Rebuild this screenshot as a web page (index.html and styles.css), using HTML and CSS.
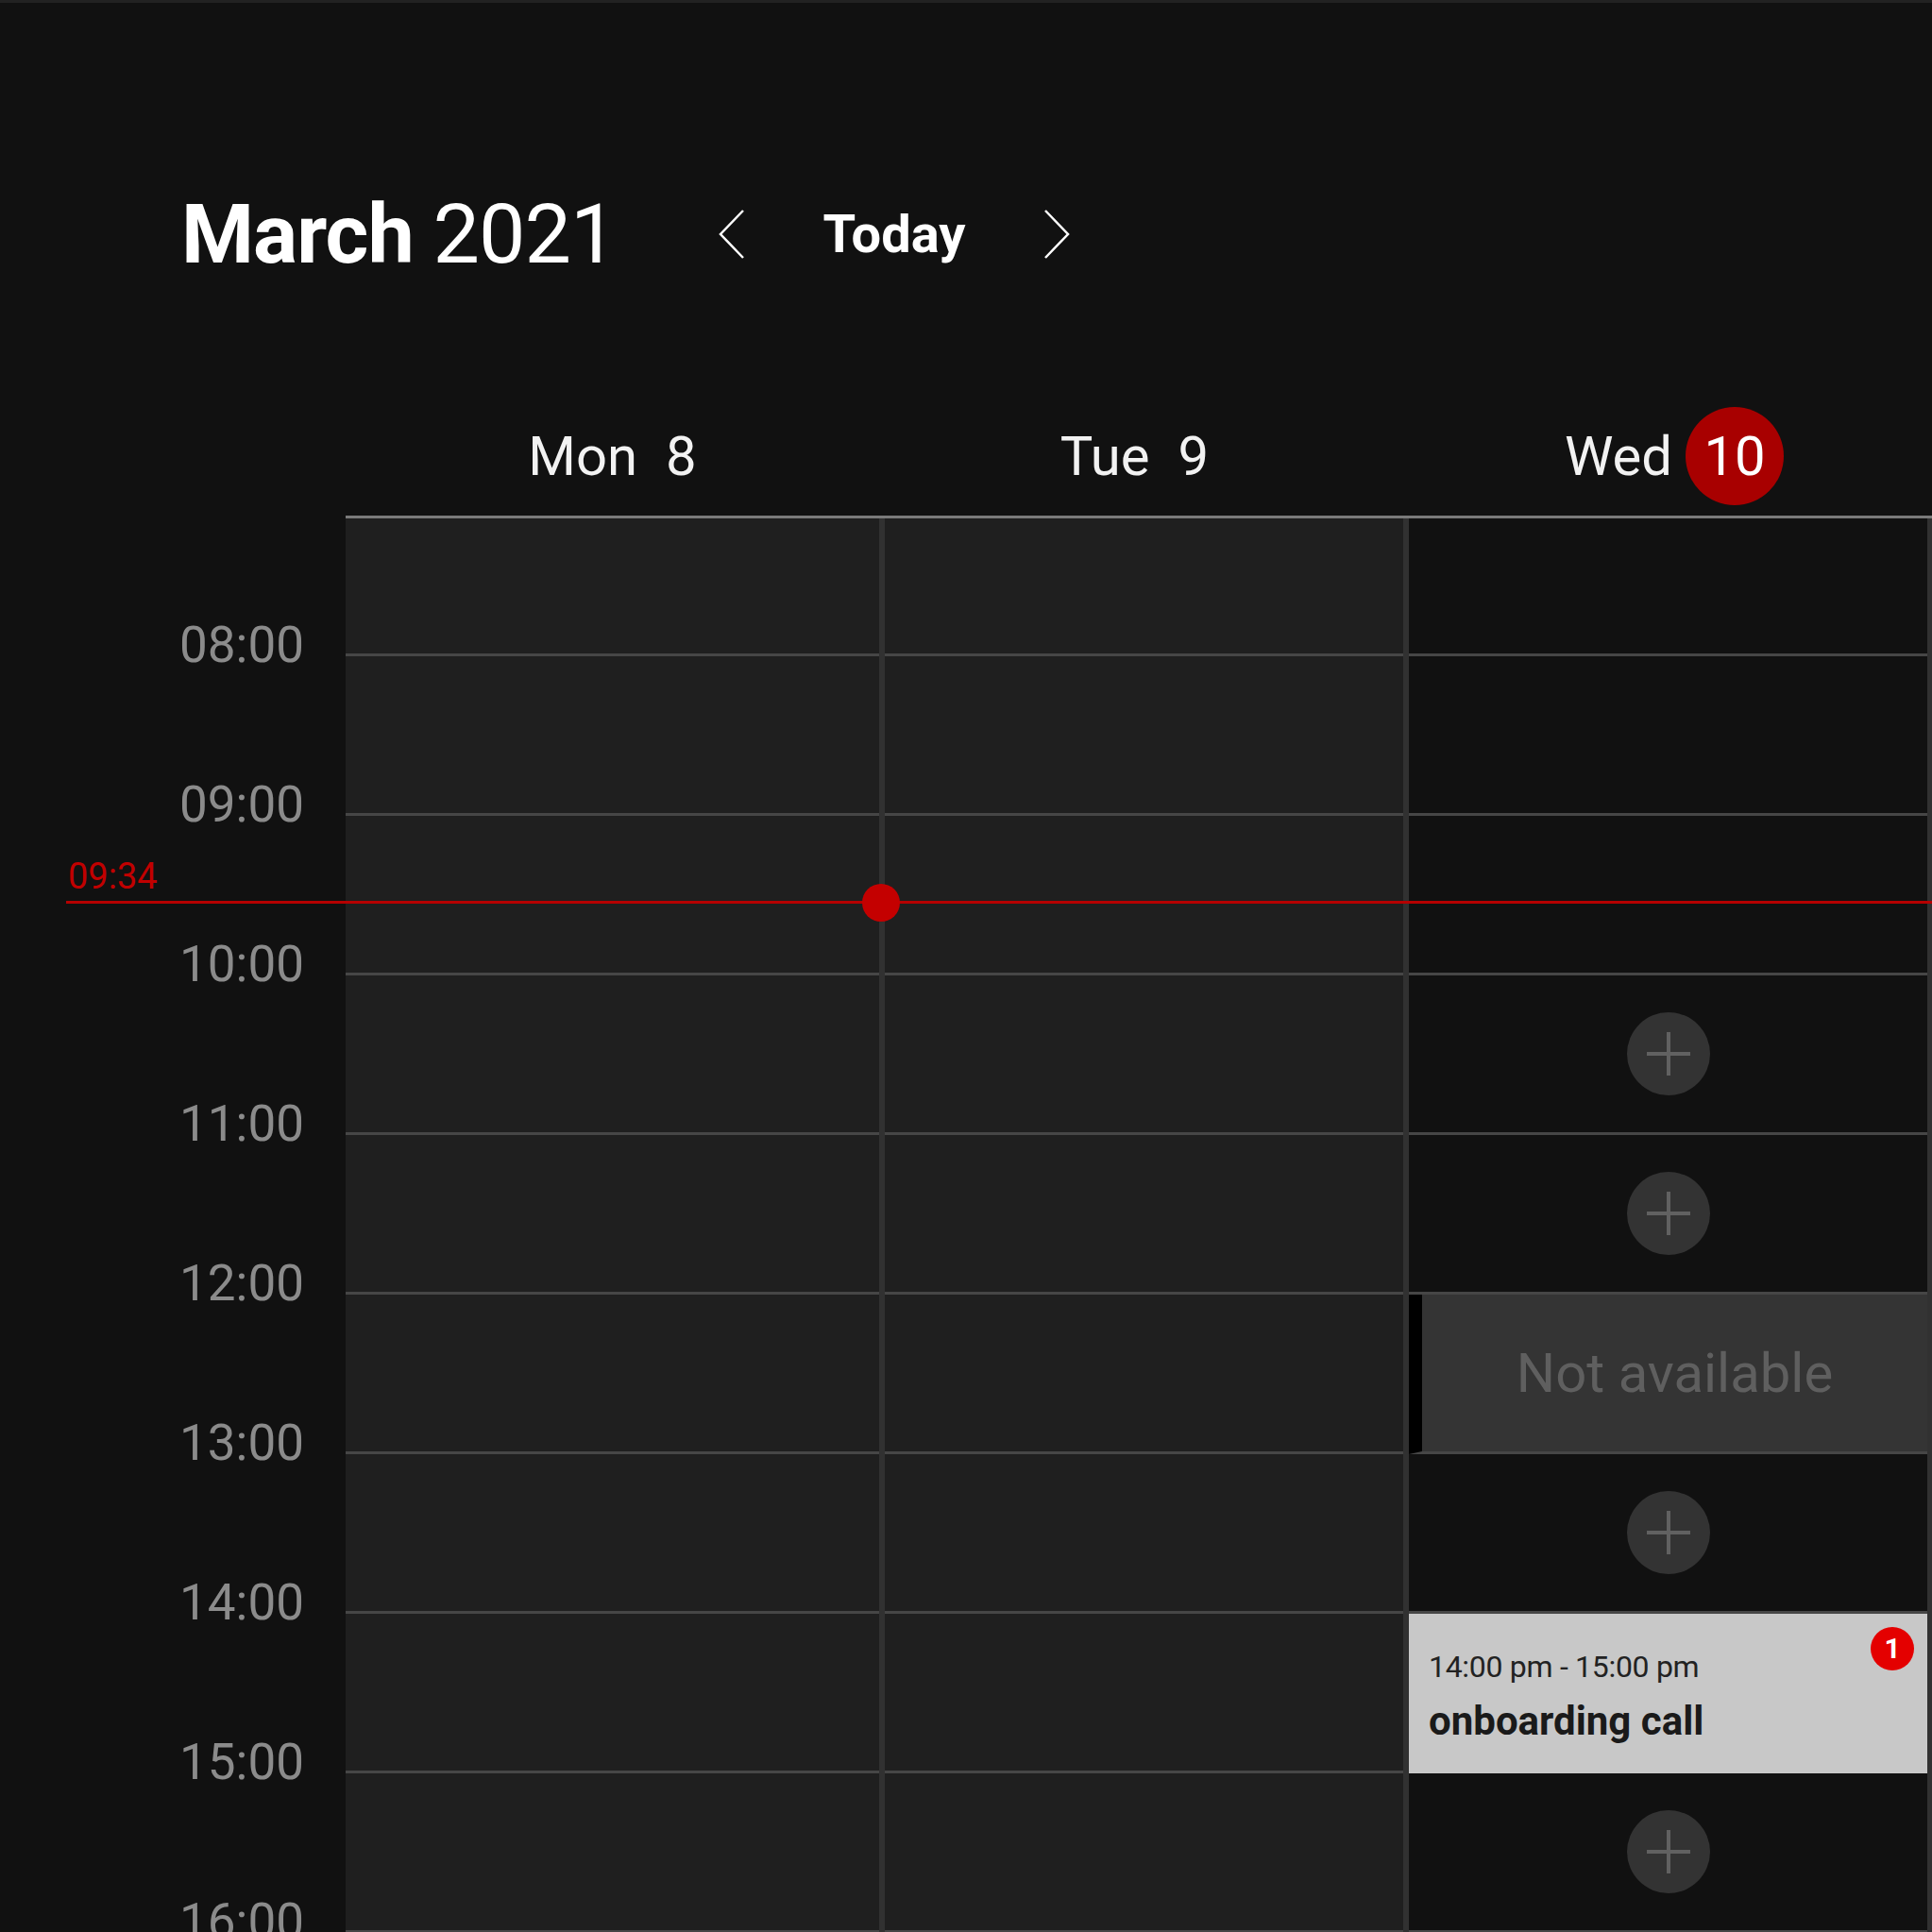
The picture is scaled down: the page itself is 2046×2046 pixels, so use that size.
FILE: index.html
```html
<!DOCTYPE html>
<html lang="en">
<head>
  <meta charset="UTF-8" />
  <meta name="viewport" content="width=device-width, initial-scale=1.0"/>
  <title>Calendar - Week</title>
  <link rel="stylesheet" href="styles.css">
</head>
<body>
  <header class="toolbar">
    <h1 class="month"><b>March</b> 2021</h1>
    <nav class="nav">
      <button class="nav-arrow" aria-label="Previous week">
        <svg width="28" height="54" viewBox="0 0 28 54"><polyline points="26,2 2,27 26,52" /></svg>
      </button>
      <button class="today">Today</button>
      <button class="nav-arrow" aria-label="Next week">
        <svg width="28" height="54" viewBox="0 0 28 54"><polyline points="2,2 26,27 2,52" /></svg>
      </button>
    </nav>
  </header>

  <div class="days">
    <div class="day"><span>Mon</span><span>8</span></div>
    <div class="day day-tue"><span>Tue</span><span>9</span></div>
    <div class="day day-today"><span>Wed</span><span class="date-badge">10</span></div>
  </div>

  <div class="week">
    <div class="hours">
      <div class="hour">08:00</div>
      <div class="hour">09:00</div>
      <div class="hour">10:00</div>
      <div class="hour">11:00</div>
      <div class="hour">12:00</div>
      <div class="hour">13:00</div>
      <div class="hour">14:00</div>
      <div class="hour">15:00</div>
      <div class="hour">16:00</div>
    </div>

    <div class="col col-mon">
      <div class="cell"></div>
      <div class="cell"></div>
      <div class="cell"></div>
      <div class="cell"></div>
      <div class="cell"></div>
      <div class="cell"></div>
      <div class="cell"></div>
      <div class="cell"></div>
      <div class="cell"></div>
    </div>

    <div class="col col-tue">
      <div class="cell"></div>
      <div class="cell"></div>
      <div class="cell"></div>
      <div class="cell"></div>
      <div class="cell"></div>
      <div class="cell"></div>
      <div class="cell"></div>
      <div class="cell"></div>
      <div class="cell"></div>
    </div>

    <div class="col col-wed">
      <div class="cell"></div>
      <div class="cell"></div>
      <div class="cell"></div>
      <div class="cell"><button class="add" aria-label="Add"><svg width="46" height="46" viewBox="0 0 46 46"><path d="M23 0v46M0 23h46" /></svg></button></div>
      <div class="cell"><button class="add" aria-label="Add"><svg width="46" height="46" viewBox="0 0 46 46"><path d="M23 0v46M0 23h46" /></svg></button></div>
      <div class="cell unavailable">Not available</div>
      <div class="cell"><button class="add" aria-label="Add"><svg width="46" height="46" viewBox="0 0 46 46"><path d="M23 0v46M0 23h46" /></svg></button></div>
      <div class="cell event">
        <div class="event-time">14:00 pm - 15:00 pm</div>
        <div class="event-title">onboarding call</div>
        <span class="event-badge">1</span>
      </div>
      <div class="cell"><button class="add" aria-label="Add"><svg width="46" height="46" viewBox="0 0 46 46"><path d="M23 0v46M0 23h46" /></svg></button></div>
    </div>

    <!-- current time marker -->
    <div class="now">
      <span class="now-time">09:34</span>
      <span class="now-dot"></span>
    </div>
  </div>
</body>
</html>
```

FILE: styles.css
```css
* { box-sizing: border-box; }
html, body {
  margin: 0;
  height: 100%;
  overflow: hidden;
}
body {
  background-color: #111;
  border-top: 3px solid #222;
  color: #fff;
  font-family: Roboto, "Liberation Sans", sans-serif;
}
button {
  font-family: inherit;
  background: none;
  border: none;
  padding: 0;
  cursor: pointer;
}

/* toolbar */
.toolbar {
  display: flex;
  align-items: center;
  height: 170px;
  margin-top: 160px;
  padding-left: 192px;
}
.month {
  margin: 0;
  width: 569px;
  font-size: 88px;
  font-weight: 400;
  line-height: 1;
  letter-spacing: -1px;
}
.month b { font-weight: 700; }
.nav {
  display: flex;
  align-items: center;
}
.nav-arrow {
  width: 28px;
  height: 54px;
  display: flex;
}
.nav-arrow polyline {
  fill: none;
  stroke: #fff;
  stroke-width: 2.5;
}
.today {
  width: 316px;
  color: #fff;
  font-size: 56px;
  font-weight: 700;
}

/* day headings */
.days {
  display: grid;
  grid-template-columns: 565px 555px 560px;
  height: 129px;
  margin: 87px 0 0 366px;
  border-bottom: 3px solid #7a7a7a;
}
.day {
  display: flex;
  align-items: center;
  justify-content: center;
  gap: 30px;
  font-size: 58px;
  color: #f2f2f2;
}
.day-tue { padding-right: 14px; }
.day-today {
  gap: 14px;
  padding-left: 14px;
}
.date-badge {
  width: 104px;
  height: 104px;
  border-radius: 50%;
  background-color: #a80000;
  color: #fff;
  display: flex;
  align-items: center;
  justify-content: center;
}

/* week grid */
.week {
  position: relative;
  display: flex;
}
.hours {
  flex: none;
  width: 366px;
  padding-top: 50px;
}
.hour {
  height: 169px;
  line-height: 169px;
  text-align: right;
  padding-right: 44px;
  font-size: 53px;
  color: #8b8b8b;
}
.col {
  flex: none;
  box-sizing: content-box;
  background-color: #1f1f1f;
}
.col-mon { width: 565px; }
.col-tue {
  width: 549px;
  border-left: 6px solid #313131;
}
.col-wed {
  width: 549px;
  border-left: 6px solid #313131;
  border-right: 5px solid #313131;
  background-color: #111;
}
.cell {
  height: 169px;
  border-bottom: 3px solid #464646;
  display: flex;
  align-items: center;
  justify-content: center;
}
.cell:first-child { height: 146px; }

.add {
  width: 88px;
  height: 88px;
  border-radius: 50%;
  background-color: #333;
  display: flex;
  align-items: center;
  justify-content: center;
}
.add path {
  stroke: #616161;
  stroke-width: 4;
}

.unavailable {
  background-color: #343434;
  border-left: 14px solid #000;
  font-size: 58px;
  color: #5f5f5f;
}

.event {
  position: relative;
  display: block;
  border-bottom: none;
  background-color: #c8c8c8;
  color: #1a1a1a;
  padding: 36px 0 0 21px;
}
.event-time {
  font-size: 32px;
  line-height: 40px;
  color: #222;
  letter-spacing: -0.3px;
}
.event-title {
  margin-top: 14px;
  font-size: 42px;
  font-weight: 700;
  line-height: 48px;
}
.event-badge {
  position: absolute;
  top: 14px;
  right: 14px;
  width: 46px;
  height: 46px;
  border-radius: 50%;
  background-color: #e40000;
  color: #fff;
  font-size: 30px;
  font-weight: 700;
  line-height: 46px;
  text-align: center;
}

/* now line */
.now {
  position: absolute;
  left: 70px;
  right: 0;
  top: 405px;
  height: 3px;
  background-color: #b50000;
}
.now-time {
  position: absolute;
  left: 2px;
  top: -45px;
  font-size: 38px;
  line-height: 38px;
  color: #c10000;
}
.now-dot {
  position: absolute;
  left: 843px;
  top: -18.5px;
  width: 40px;
  height: 40px;
  border-radius: 50%;
  background-color: #c40000;
}
```
